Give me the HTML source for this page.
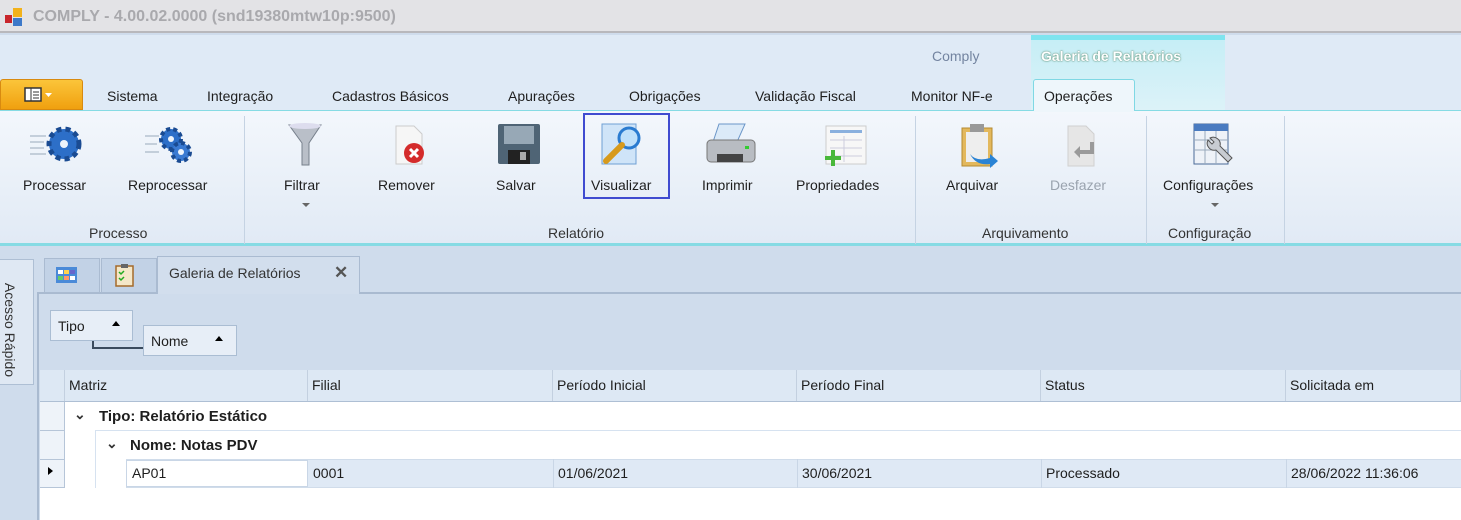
<!DOCTYPE html>
<html><head><meta charset="utf-8"><style>
*{margin:0;padding:0;box-sizing:border-box}
body{width:1461px;height:520px;overflow:hidden;font-family:"Liberation Sans",sans-serif;font-size:14px;color:#1e1e1e;background:#cfdcec;position:relative}
.a{position:absolute}
.tab{position:absolute;top:88px;font-size:14px}
.btn{position:absolute;top:177px;font-size:14px;text-align:center;white-space:nowrap}
.ic{position:absolute;top:122px}
.glab{position:absolute;top:225px;font-size:14px;color:#333}
.sep{position:absolute;top:116px;width:1px;height:128px;background:#c5d3e3}
.hd{position:absolute;top:370px;height:32px;border-right:1px solid #c3d0e0;padding:7px 4px;background:#dde8f4}
.cell{position:absolute;height:29px;padding:6px 4px;border-right:1px solid #c9d6e6}
</style></head><body>
<!-- title bar -->
<div class="a" style="left:0;top:0;width:1461px;height:33px;background:#e3e3e6;border-bottom:2px solid #b8b8bc"></div>
<svg class="a" style="left:4px;top:7px" width="20" height="20"><rect x="9" y="1" width="9" height="9" fill="#f2b21b"/><rect x="1" y="8" width="7" height="8" fill="#c8252b"/><rect x="9" y="11" width="9" height="8" fill="#3d79c9"/></svg>
<div class="a" style="left:33px;top:8px;font-size:16px;font-weight:bold;color:#a9a9ad">COMPLY - 4.00.02.0000 (snd19380mtw10p:9500)</div>
<!-- ribbon header -->
<div class="a" style="left:0;top:35px;width:1461px;height:75px;background:#dfeaf6"></div>
<div class="a" style="left:1031px;top:35px;width:194px;height:75px;background:linear-gradient(#c6eef6,#dcf2f8);border-top:5px solid #7fe4ef"></div>
<div class="a" style="left:932px;top:48px;color:#7384a0">Comply</div>
<div class="a" style="left:1041px;top:48px;color:#fff;text-shadow:0 0 2px #6a8,0 0 1px #555;font-weight:bold;font-size:14px">Galeria de Relatórios</div>
<div class="a" style="left:0;top:79px;width:83px;height:31px;background:linear-gradient(#fbc53a,#f0a00f);border:1px solid #d88a10;border-radius:3px 3px 0 0"></div>
<svg class="a" style="left:22px;top:86px" width="40" height="18"><rect x="3" y="2" width="16" height="13" fill="#fff" stroke="#333" stroke-width="1.5"/><line x1="9" y1="2" x2="9" y2="15" stroke="#333"/><line x1="11" y1="6" x2="17" y2="6" stroke="#333"/><line x1="11" y1="9" x2="17" y2="9" stroke="#333"/><line x1="11" y1="12" x2="17" y2="12" stroke="#333"/><path d="M23 7h7l-3.5 4z" fill="#fff"/></svg>
<div class="tab" style="left:107px">Sistema</div>
<div class="tab" style="left:207px">Integração</div>
<div class="tab" style="left:332px">Cadastros Básicos</div>
<div class="tab" style="left:508px">Apurações</div>
<div class="tab" style="left:629px">Obrigações</div>
<div class="tab" style="left:755px">Validação Fiscal</div>
<div class="tab" style="left:911px">Monitor NF-e</div>
<div class="a" style="left:1033px;top:79px;width:102px;height:33px;background:#eef6fb;border:1px solid #7fd8e4;border-bottom:none;border-radius:3px 3px 0 0"></div>
<div class="tab" style="left:1044px">Operações</div>
<!-- ribbon body -->
<div class="a" style="left:0;top:110px;width:1461px;height:136px;background:linear-gradient(#f3f7fc,#e1eaf5);border-top:1px solid #86dbe4;border-bottom:3px solid #86dbe4"></div>
<div class="a" style="left:1034px;top:109px;width:100px;height:3px;background:#eef6fb"></div>
<div class="sep" style="left:244px"></div><div class="sep" style="left:915px"></div><div class="sep" style="left:1146px"></div><div class="sep" style="left:1284px"></div>
<!-- icons -->
<svg class="ic" style="left:30px" width="56" height="44"><g stroke="#9ab" stroke-width="1"><line x1="0" y1="14" x2="16" y2="14"/><line x1="0" y1="20" x2="14" y2="20"/><line x1="0" y1="26" x2="14" y2="26"/><line x1="0" y1="32" x2="16" y2="32"/></g><circle cx="34" cy="22" r="15" fill="#2d6fc8" stroke="#1a4b92" stroke-width="5" stroke-dasharray="5 4"/><circle cx="34" cy="22" r="4" fill="#eef4fb"/></svg>
<svg class="ic" style="left:145px" width="56" height="44"><g stroke="#9ab"><line x1="0" y1="14" x2="14" y2="14"/><line x1="0" y1="22" x2="12" y2="22"/><line x1="0" y1="30" x2="14" y2="30"/></g><circle cx="26" cy="17" r="10" fill="#2d6fc8" stroke="#1a4b92" stroke-width="4" stroke-dasharray="4 3"/><circle cx="36" cy="30" r="9" fill="#3a7ad2" stroke="#1a4b92" stroke-width="4" stroke-dasharray="4 3"/><circle cx="26" cy="17" r="3" fill="#eef4fb"/><circle cx="36" cy="30" r="3" fill="#eef4fb"/></svg>
<svg class="ic" style="left:286px" width="40" height="46"><path d="M3 3h32l-12 18v22h-7V21z" fill="#b9bfc8" stroke="#77808c"/><ellipse cx="19" cy="4" rx="16" ry="3" fill="#dde"/></svg>
<svg class="ic" style="left:390px" width="40" height="46"><path d="M6 4h18l8 8v30H6z" fill="#f6f6f6" stroke="#ccc"/><circle cx="24" cy="31" r="10" fill="#d42b2b"/><path d="M20 27l8 8M28 27l-8 8" stroke="#fff" stroke-width="3"/></svg>
<svg class="ic" style="left:496px" width="46" height="46"><rect x="2" y="2" width="42" height="40" fill="#4f6475" rx="2"/><rect x="8" y="4" width="30" height="18" fill="#97a8b6"/><rect x="12" y="28" width="22" height="14" fill="#222"/><rect x="24" y="30" width="6" height="8" fill="#aaa"/></svg>
<svg class="ic" style="left:600px" width="46" height="46"><rect x="2" y="2" width="34" height="40" fill="#cfe4f8" stroke="#6fa0d4"/><circle cx="29" cy="16" r="10" fill="#bfe0fa" stroke="#2a7bd0" stroke-width="3"/><path d="M22 23L6 39" stroke="#d79a1c" stroke-width="6" stroke-linecap="round"/></svg>
<svg class="ic" style="left:705px" width="52" height="46"><path d="M14 2h26l-8 18H8z" fill="#dbeaf8" stroke="#6b96c8"/><rect x="2" y="18" width="48" height="22" rx="4" fill="#b8bcc2" stroke="#777"/><rect x="12" y="32" width="26" height="8" fill="#444"/><rect x="40" y="24" width="4" height="3" fill="#3c3"/></svg>
<svg class="ic" style="left:822px" width="46" height="46"><rect x="4" y="4" width="40" height="38" fill="#f7f7f7" stroke="#ccc"/><rect x="8" y="8" width="32" height="3" fill="#8ab0de"/><g stroke="#ccd"><line x1="8" y1="18" x2="40" y2="18"/><line x1="8" y1="26" x2="40" y2="26"/><line x1="8" y1="34" x2="40" y2="34"/><line x1="22" y1="14" x2="22" y2="40"/></g><path d="M9 28h4v6h6v4h-6v6H9v-6H3v-4h6z" fill="#49b83a"/></svg>
<svg class="ic" style="left:958px" width="46" height="48"><rect x="4" y="6" width="30" height="38" fill="#e3b85c" stroke="#b58a30"/><rect x="8" y="10" width="22" height="30" fill="#eee"/><rect x="12" y="2" width="14" height="8" fill="#999"/><path d="M12 32q6 8 20 4v-4l8 7-8 7v-4q-14 2-20-10z" fill="#2a83d4"/></svg>
<svg class="ic" style="left:1062px" width="40" height="46"><path d="M6 4h18l8 8v32H6z" fill="#e6e6e6" stroke="#d0d0d0"/><path d="M12 30l6-6v4h10v-8h4v12H18v4z" fill="#9a9a9a"/></svg>
<svg class="ic" style="left:1192px" width="46" height="46"><rect x="2" y="2" width="34" height="40" fill="#eef2f8" stroke="#4a6a98"/><rect x="2" y="2" width="34" height="7" fill="#4a7bc0"/><g stroke="#9ab"><line x1="13" y1="9" x2="13" y2="42"/><line x1="24" y1="9" x2="24" y2="42"/><line x1="2" y1="18" x2="36" y2="18"/><line x1="2" y1="28" x2="36" y2="28"/></g><path d="M16 18a7 7 0 0 0 8 10l12 12 4-4-12-12a7 7 0 0 0-10-8l4 4-2 2z" fill="#c8ccd2" stroke="#555"/></svg>
<!-- labels -->
<div class="btn" style="left:23px">Processar</div>
<div class="btn" style="left:128px">Reprocessar</div>
<div class="btn" style="left:284px">Filtrar</div>
<div class="a" style="left:302px;top:203px;border:4px solid transparent;border-top:4px solid #666"></div>
<div class="btn" style="left:378px">Remover</div>
<div class="btn" style="left:496px">Salvar</div>
<div class="a" style="left:583px;top:113px;width:87px;height:86px;border:2px solid #3f4bd0"></div>
<div class="btn" style="left:591px">Visualizar</div>
<div class="btn" style="left:702px">Imprimir</div>
<div class="btn" style="left:796px">Propriedades</div>
<div class="btn" style="left:946px">Arquivar</div>
<div class="btn" style="left:1050px;color:#9aa3ae">Desfazer</div>
<div class="btn" style="left:1163px">Configurações</div>
<div class="a" style="left:1211px;top:203px;border:4px solid transparent;border-top:4px solid #666"></div>
<div class="glab" style="left:89px">Processo</div>
<div class="glab" style="left:548px">Relatório</div>
<div class="glab" style="left:982px">Arquivamento</div>
<div class="glab" style="left:1168px">Configuração</div>
<!-- lower -->
<div class="a" style="left:0;top:259px;width:34px;height:126px;background:#dfe8f3;border:1px solid #aebfd4;border-left:none"></div>
<div class="a" style="left:2px;top:322px;transform:rotate(90deg);transform-origin:center;width:120px;margin-left:-52px;text-align:center;font-size:14px;color:#333">Acesso Rápido</div>
<div class="a" style="left:37px;top:292px;width:1424px;height:228px;border:2px solid #a9bad0;border-right:none;border-bottom:none;background:#cfdcec"></div>
<div class="a" style="left:44px;top:258px;width:56px;height:35px;background:#c2d2e6;border:1px solid #aabbd1"></div>
<div class="a" style="left:101px;top:258px;width:56px;height:35px;background:#c2d2e6;border:1px solid #aabbd1"></div>
<svg class="a" style="left:56px;top:265px" width="22" height="20"><rect x="0" y="2" width="21" height="16" fill="#4a8ad8"/><rect x="2" y="5" width="5" height="4" fill="#fff"/><rect x="8" y="5" width="5" height="4" fill="#ffd34d"/><rect x="14" y="5" width="5" height="4" fill="#66c"/><rect x="2" y="11" width="5" height="4" fill="#6c6"/><rect x="8" y="11" width="5" height="4" fill="#f96"/><rect x="14" y="11" width="5" height="4" fill="#fff"/></svg>
<svg class="a" style="left:115px;top:263px" width="20" height="24"><rect x="1" y="3" width="17" height="20" fill="#f4e7c8" stroke="#a56a2a" stroke-width="1.5"/><rect x="6" y="1" width="7" height="4" fill="#666"/><path d="M4 9l2 2 3-3M4 15l2 2 3-3" stroke="#2a2" fill="none" stroke-width="1.5"/></svg>
<div class="a" style="left:157px;top:256px;width:203px;height:38px;background:#d2deed;border:1px solid #aabbd1;border-bottom:none"></div>
<div class="a" style="left:169px;top:265px;font-size:14px;color:#333">Galeria de Relatórios</div>
<div class="a" style="left:334px;top:263px;font-size:17px;font-weight:bold;color:#555">✕</div>
<!-- group panel -->
<div class="a" style="left:50px;top:310px;width:83px;height:31px;background:#e7eef7;border:1px solid #aabdd3"></div>
<div class="a" style="left:58px;top:318px">Tipo</div>
<div class="a" style="left:112px;top:321px;border:4px solid transparent;border-bottom:5px solid #000;border-top:none"></div>
<div class="a" style="left:92px;top:341px;width:52px;height:8px;border-left:2px solid #3b4b5e;border-bottom:2px solid #3b4b5e"></div>
<div class="a" style="left:143px;top:325px;width:94px;height:31px;background:#e7eef7;border:1px solid #aabdd3"></div>
<div class="a" style="left:151px;top:333px">Nome</div>
<div class="a" style="left:215px;top:336px;border:4px solid transparent;border-bottom:5px solid #000;border-top:none"></div>
<!-- grid -->
<div class="a" style="left:40px;top:370px;width:1421px;height:150px;background:#fff"></div>
<div class="hd" style="left:40px;width:25px"></div>
<div class="hd" style="left:65px;width:243px">Matriz</div>
<div class="hd" style="left:308px;width:245px">Filial</div>
<div class="hd" style="left:553px;width:244px">Período Inicial</div>
<div class="hd" style="left:797px;width:244px">Período Final</div>
<div class="hd" style="left:1041px;width:245px">Status</div>
<div class="hd" style="left:1286px;width:175px">Solicitada em</div>
<div class="a" style="left:40px;top:401px;width:1421px;height:1px;background:#aebfd4"></div>
<div class="a" style="left:40px;top:402px;width:25px;height:86px;background:#eef3f9;border-right:1px solid #b6c5d8"></div>
<div class="a" style="left:40px;top:430px;width:25px;height:1px;background:#b6c5d8"></div>
<div class="a" style="left:40px;top:459px;width:25px;height:1px;background:#b6c5d8"></div>
<div class="a" style="left:40px;top:487px;width:25px;height:1px;background:#b6c5d8"></div>
<div class="a" style="left:74px;top:406px;font-weight:bold;color:#333">⌄</div>
<div class="a" style="left:99px;top:408px;font-weight:bold;font-size:15px">Tipo: Relatório Estático</div>
<div class="a" style="left:95px;top:430px;width:1366px;height:1px;background:#d6e2f0"></div>
<div class="a" style="left:95px;top:430px;width:1px;height:58px;background:#d6e2f0"></div>
<div class="a" style="left:106px;top:435px;font-weight:bold;color:#333">⌄</div>
<div class="a" style="left:130px;top:437px;font-weight:bold;font-size:15px">Nome: Notas PDV</div>
<div class="a" style="left:126px;top:459px;width:1335px;height:29px;background:#dfe9f5;border-top:1px solid #d0dcea;border-bottom:1px solid #d0dcea"></div>
<div class="a" style="left:126px;top:460px;width:182px;height:27px;background:#fff;border:1px solid #c9d6e6"></div>
<div class="a" style="left:48px;top:467px;border:4px solid transparent;border-left:5px solid #000;border-right:none"></div>
<div class="a" style="left:132px;top:465px">AP01</div>
<div class="a" style="left:313px;top:465px">0001</div>
<div class="a" style="left:553px;top:459px;width:1px;height:29px;background:#c9d6e6"></div>
<div class="a" style="left:797px;top:459px;width:1px;height:29px;background:#c9d6e6"></div>
<div class="a" style="left:1041px;top:459px;width:1px;height:29px;background:#c9d6e6"></div>
<div class="a" style="left:1286px;top:459px;width:1px;height:29px;background:#c9d6e6"></div>
<div class="a" style="left:558px;top:465px">01/06/2021</div>
<div class="a" style="left:802px;top:465px">30/06/2021</div>
<div class="a" style="left:1046px;top:465px">Processado</div>
<div class="a" style="left:1291px;top:465px">28/06/2022 11:36:06</div>
</body></html>
